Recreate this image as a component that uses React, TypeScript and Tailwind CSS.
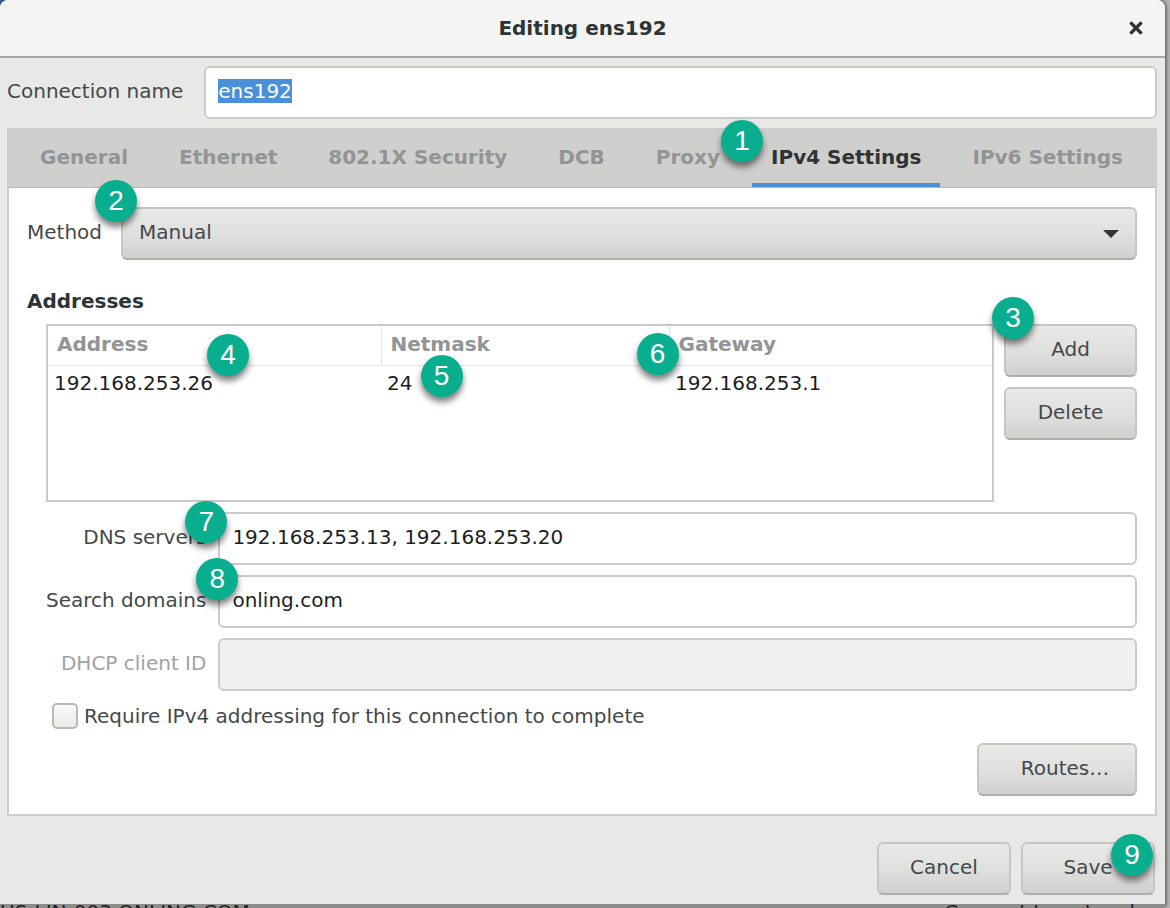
import { useEffect, useRef, useState } from 'react';
import type { ButtonHTMLAttributes } from 'react';
import clsx from 'clsx';

const tabs = [
  'General',
  'Ethernet',
  '802.1X Security',
  'DCB',
  'Proxy',
  'IPv4 Settings',
  'IPv6 Settings',
];

const addresses = [
  { address: '192.168.253.26', netmask: '24', gateway: '192.168.253.1' },
];

const fieldClass =
  'h-[53px] w-full min-w-0 rounded-md border-2 border-[#cbcbc7] bg-white px-3 pb-[3px] text-[#1c1e1f] outline-none disabled:bg-[#f0f0f0]';

const raisedClass =
  'h-[53px] rounded-md border-2 border-[#c6c6c2] border-b-[#aeaea9] bg-linear-to-b from-[#e9e9e7] via-[#e0e0de] to-[#d0d0ce] pb-[3px] text-[#43494b]';

type StepProps = { n: number; className: string };

const Step = ({ n, className }: StepProps) => (
  <span
    className={clsx(
      'pointer-events-none absolute z-10 flex size-[42px] items-center justify-center rounded-full bg-[#08ae8e]',
      "font-['Liberation_Sans',sans-serif] text-[28px] leading-none font-normal text-white shadow-[0_5px_6px_rgba(0,0,0,0.5)]",
      className,
    )}
  >
    {n}
  </span>
);

const Button = ({
  className,
  ...props
}: ButtonHTMLAttributes<HTMLButtonElement>) => (
  <button type="button" className={clsx(raisedClass, className)} {...props} />
);

const App = () => {
  const [activeTab, setActiveTab] = useState('IPv4 Settings');
  const nameRef = useRef<HTMLInputElement>(null);

  useEffect(() => {
    nameRef.current?.focus();
    nameRef.current?.select();
  }, []);

  return (
    <div className="min-h-screen overflow-hidden bg-linear-to-r from-[#3f6fae] from-50% to-[#b4b4b4] to-50% pr-[5px] font-['DejaVu_Sans',sans-serif] text-[20px] leading-6 text-[#43494b]">
      <div className="rounded-t-lg bg-[#e8e8e6] shadow-[0_0_3px_2px_rgba(0,0,0,0.4)]">
        <header className="grid h-[58px] grid-cols-[1fr_auto_1fr] items-center rounded-t-lg border-b-2 border-[#a8a8a2] bg-[#f4f4f3] px-[22px]">
          <h1 className="col-start-2 font-bold text-[#2e3436]">
            Editing ens192
          </h1>
          <button type="button" aria-label="Close" className="justify-self-end">
            <svg
              viewBox="0 0 14 14"
              className="size-[14px]"
              fill="none"
              stroke="#2e3436"
              strokeWidth="3.4"
            >
              <path d="M1.4 1.4 12.6 12.6M12.6 1.4 1.4 12.6" />
            </svg>
          </button>
        </header>

        <main className="pt-2 pr-2 pl-[7px]">
          <div className="flex items-center gap-[21px]">
            <label htmlFor="connection" className="shrink-0 pb-[3px]">
              Connection name
            </label>
            <input
              id="connection"
              ref={nameRef}
              defaultValue="ens192"
              className={clsx(
                fieldClass,
                'leading-[27px] selection:bg-[#4a90d9] selection:text-white',
              )}
            />
          </div>

          <section className="mt-[9px] border-2 border-[#cdcdca] bg-white">
            <div
              role="tablist"
              className="flex h-[58px] gap-[13px] border-b border-[#b8b8b5] bg-[#cfcfcd] pl-3"
            >
              {tabs.map((tab) => (
                <div key={tab} className="relative flex">
                  <button
                    type="button"
                    role="tab"
                    aria-selected={tab === activeTab}
                    onClick={() => setActiveTab(tab)}
                    className={clsx(
                      'border-b-4 px-[19px] font-bold whitespace-nowrap',
                      tab === activeTab
                        ? 'border-[#4a90d9] text-[#2e3436]'
                        : 'border-transparent text-[#929595]',
                    )}
                  >
                    {tab}
                  </button>
                  {tab === 'Proxy' && (
                    <Step n={1} className="-top-[10px] -right-6" />
                  )}
                </div>
              ))}
            </div>

            <div className="px-[18px] pt-[19px] pb-[18px]">
              <div className="flex items-center gap-[19px]">
                <label htmlFor="method" className="pb-[3px]">
                  Method
                </label>
                <div className="relative grow">
                  <select
                    id="method"
                    className={clsx(raisedClass, 'w-full appearance-none px-4')}
                  >
                    <option>Manual</option>
                  </select>
                  <svg
                    viewBox="0 0 16 8"
                    className="pointer-events-none absolute top-[23px] right-[18px] h-2 w-4"
                  >
                    <path d="M0 0h16L8 8z" fill="#2e3436" />
                  </svg>
                  <Step n={2} className="-top-[27px] -left-[26px]" />
                </div>
              </div>

              <h2 className="mt-[29px] font-bold text-[#2e3436]">Addresses</h2>

              <div className="mt-[11px] ml-[19px] flex gap-[10px]">
                <div className="h-[178px] grow border-2 border-[#c9c9c6]">
                  <table className="w-full table-fixed border-collapse text-left">
                    <thead>
                      <tr className="h-[39px] border-b border-[#e4e4e4] text-[#929595]">
                        <th className="relative w-[333px] border-r border-[#e4e4e4] pb-[3px] pl-[9px]">
                          Address
                          <Step n={4} className="top-2 left-[159px]" />
                        </th>
                        <th className="relative w-[288px] border-r border-[#e4e4e4] pb-[3px] pl-[9px]">
                          Netmask
                          <Step n={5} className="top-[29px] left-[39px]" />
                          <Step n={6} className="top-[7px] -right-[10px]" />
                        </th>
                        <th className="pb-[3px] pl-[9px]">Gateway</th>
                      </tr>
                    </thead>
                    <tbody className="text-[#1c1e1f]">
                      {addresses.map((row) => (
                        <tr key={row.address} className="h-9">
                          <td className="pl-1.5">{row.address}</td>
                          <td className="pl-1.5">{row.netmask}</td>
                          <td className="pl-1.5">{row.gateway}</td>
                        </tr>
                      ))}
                    </tbody>
                  </table>
                </div>
                <div className="relative flex w-[133px] shrink-0 flex-col gap-[10px]">
                  <Button>Add</Button>
                  <Button>Delete</Button>
                  <Step n={3} className="-top-[27px] -left-3" />
                </div>
              </div>

              <div className="mt-[10px] ml-[19px] grid grid-cols-[auto_1fr] items-center gap-x-3 gap-y-[10px]">
                <label htmlFor="dns" className="pb-[3px] text-right">
                  DNS servers
                </label>
                <div className="relative">
                  <input
                    id="dns"
                    defaultValue="192.168.253.13, 192.168.253.20"
                    className={fieldClass}
                  />
                  <Step n={7} className="-top-[11px] -left-[33px]" />
                </div>
                <label htmlFor="search" className="pb-[3px] text-right">
                  Search domains
                </label>
                <div className="relative">
                  <input
                    id="search"
                    defaultValue="onling.com"
                    className={fieldClass}
                  />
                  <Step n={8} className="-top-[17px] -left-[22px]" />
                </div>
                <label
                  htmlFor="dhcp"
                  className="pb-[3px] text-right text-[#a0a3a3]"
                >
                  DHCP client ID
                </label>
                <input id="dhcp" disabled className={fieldClass} />
              </div>

              <div className="mt-3 ml-[25px] flex items-center gap-[6px]">
                <input
                  id="require"
                  type="checkbox"
                  className="size-[26px] appearance-none rounded-[5px] border-2 border-[#b9b9b4] bg-linear-to-b from-[#fafafa] to-[#e9e9e8] checked:bg-[#4a90d9]"
                />
                <label htmlFor="require">
                  Require IPv4 addressing for this connection to complete
                </label>
              </div>

              <div className="mt-[14px] flex justify-end">
                <Button className="w-[160px] pl-4">Routes…</Button>
              </div>
            </div>
          </section>
        </main>

        <footer className="flex justify-end gap-[10px] px-[10px] pt-[26px] pb-[9px]">
          <Button className="w-[134px]">Cancel</Button>
          <div className="relative">
            <Button className="w-[134px]">Save</Button>
            <Step n={9} className="-top-2 right-[2px]" />
          </div>
        </footer>
      </div>

      {/* window behind the dialog, only its top edge shows */}
      <div className="flex h-1 justify-between overflow-hidden bg-[#8d8d8b] pr-6 text-[20px] leading-4 text-[#222]">
        <span>US-LIN-003.ONLING.COM</span>
        <span>Connect to network</span>
      </div>
    </div>
  );
};

export default App;
